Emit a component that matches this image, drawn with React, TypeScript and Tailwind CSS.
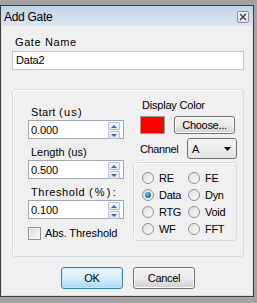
import React from "react";

function Spinner() {
  return (
    <div className="flex flex-col gap-[1px] pr-[3px] pt-[1px]">
      <div className="w-[12px] h-[8px] border border-[#b7c3d3] rounded-[1px] bg-gradient-to-b from-[#f3f6fa] to-[#dbe3ee] flex items-center justify-center">
        <svg width="6" height="3" viewBox="0 0 6 3"><path d="M3 0L6 3H0Z" fill="#4b6394" /></svg>
      </div>
      <div className="w-[12px] h-[8px] border border-[#b7c3d3] rounded-[1px] bg-gradient-to-b from-[#f3f6fa] to-[#dbe3ee] flex items-center justify-center">
        <svg width="6" height="3" viewBox="0 0 6 3"><path d="M0 0H6L3 3Z" fill="#4b6394" /></svg>
      </div>
    </div>
  );
}

function NumField({ label, value, first }: { label: React.ReactNode; value: string; first?: boolean }) {
  return (
    <div className={first ? "flex flex-col" : "flex flex-col mt-[6px]"}>
      <div className="h-[14px] pl-[3px] whitespace-nowrap">{label}</div>
      <div className="mt-[1px] w-[96px] h-[19px] border border-[#a3a8b0] bg-white flex items-start">
        <div className="flex-1 pl-[2px] pt-[1px] h-[17px] leading-[16px] tracking-[-0.1px]">{value}</div>
        <Spinner />
      </div>
    </div>
  );
}

function Radio({ label, checked }: { label: string; checked?: boolean }) {
  return (
    <div className="flex items-center h-[17px]">
      <div className="w-[12px] h-[12px] rounded-full border border-[#8e9092] bg-gradient-to-br from-[#dedede] to-[#fbfbfb] flex items-center justify-center">
        {checked && (
          <div className="w-[6px] h-[6px] rounded-full bg-[radial-gradient(circle_at_40%_35%,#8fd0f6_0%,#2a86c8_45%,#0d4a86_100%)]" />
        )}
      </div>
      <span className="ml-[5px] tracking-[-0.3px]">{label}</span>
    </div>
  );
}

function Btn({ label, def, w, h }: { label: string; def?: boolean; w: string; h: string }) {
  return (
    <div
      className={
        "rounded-[3px] border flex items-center justify-center tracking-[-0.3px] " +
        w +
        " " +
        h +
        (def
          ? " border-[#3c7fb1] bg-gradient-to-b from-[#eaf6fd] via-[#d9f0fc] to-[#a7d9f5] shadow-[inset_0_0_0_1px_#c5e8fa]"
          : " border-[#707070] bg-gradient-to-b from-[#f2f2f2] via-[#ebebeb] to-[#cfcfcf] shadow-[inset_0_0_0_1px_#fcfcfc]")
      }
    >
      {label}
    </div>
  );
}

export default function App() {
  return (
    <div className="w-[257px] h-[303px] bg-[#a3a3a3] pt-[5px] font-['Liberation_Sans',Arial,sans-serif] text-[11px] leading-[14px] text-black">
      <div className="w-[254px] h-[292px] border border-[#3e3e3e] flex flex-col">
        <div className="h-[20px] bg-gradient-to-b from-[#c2d3e8] to-[#dbe6f2] flex items-start justify-between pl-[3px] pr-[4px]">
          <span className="pt-[4px] text-[12px] tracking-[-0.3px]">Add Gate</span>
          <div className="mt-[5px] w-[12px] h-[12px] rounded-[2px] border border-[#8294ad] bg-gradient-to-b from-[#f7f9fc] to-[#d9e2ee] flex items-center justify-center">
            <svg width="8" height="8" viewBox="0 0 8 8">
              <path d="M1 1L7 7M7 1L1 7" stroke="#ffffff" strokeWidth="3.2" strokeLinecap="square" />
              <path d="M1.5 1.5L6.5 6.5M6.5 1.5L1.5 6.5" stroke="#4a4a4a" strokeWidth="1.6" strokeLinecap="square" />
            </svg>
          </div>
        </div>
        <div className="flex-1 bg-[#f0f0f0] border-x border-b border-[#d3deeb] flex flex-col pt-[9px]">
          <div className="ml-[13px] h-[14px] tracking-[0.6px]">Gate Name</div>
          <div className="mt-[2px] ml-[10px] w-[232px] h-[19px] border border-[#c4c8ce] bg-white pl-[3px] leading-[17px] tracking-[-0.2px]">
            Data2
          </div>
          <div className="mt-[19px] ml-[10px] w-[232px] h-[168px] border border-[#d3dce3] rounded-[3px] shadow-[inset_1px_1px_0_#ffffff] flex">
            <div className="w-[111px] shrink-0 pl-[15px] pt-[15px] flex flex-col">
              <NumField
                first
                value="0.000"
                label={
                  <span className="tracking-[0.3px]">
                    Start <span className="tracking-[1.2px]">(us)</span>
                  </span>
                }
              />
              <NumField value="0.500" label={<span>Length (us)</span>} />
              <NumField
                value="0.100"
                label={
                  <span className="tracking-[0.6px]">
                    Threshold <span className="tracking-[2.2px]">(%):</span>
                  </span>
                }
              />
              <div className="mt-[7px] flex items-center">
                <div className="w-[13px] h-[13px] border border-[#8e8f8f] bg-gradient-to-br from-[#d8d8d8] to-[#fafafa] shadow-[inset_0_0_0_1px_#f4f4f4]" />
                <span className="ml-[4px] whitespace-nowrap tracking-[-0.1px]">Abs. Threshold</span>
              </div>
            </div>
            <div className="ml-[9px] w-[104px] shrink-0 pt-[8px] flex flex-col">
              <div className="ml-[9px] h-[14px] tracking-[-0.2px]">Display Color</div>
              <div className="mt-[4px] ml-[7px] flex items-center">
                <div className="w-[25px] h-[18px] bg-[#ff0000] border border-[#9a9a9a]" />
                <div className="ml-[9px]">
                  <Btn label="Choose..." w="w-[61px]" h="h-[18px]" />
                </div>
              </div>
              <div className="mt-[4px] ml-[7px] flex items-center">
                <span className="w-[47px] tracking-[-0.4px]">Channel</span>
                <div className="w-[50px] h-[21px] rounded-[3px] border border-[#707070] bg-gradient-to-b from-[#f6f6f6] to-[#e2e2e2] flex items-center justify-between pl-[4px] pr-[5px]">
                  <span>A</span>
                  <svg width="7" height="4" viewBox="0 0 7 4"><path d="M0 0H7L3.5 4Z" fill="#000" /></svg>
                </div>
              </div>
              <div className="mt-[3px] w-[104px] h-[79px] border border-[#d3dce3] rounded-[3px] shadow-[inset_1px_1px_0_#ffffff] pt-[6px] pl-[8px] flex">
                <div className="w-[46px] flex flex-col">
                  <Radio label="RE" />
                  <Radio label="Data" checked />
                  <Radio label="RTG" />
                  <Radio label="WF" />
                </div>
                <div className="flex flex-col">
                  <Radio label="FE" />
                  <Radio label="Dyn" />
                  <Radio label="Void" />
                  <Radio label="FFT" />
                </div>
              </div>
            </div>
          </div>
          <div className="mt-[10px] ml-[59px] flex">
            <Btn label="OK" def w="w-[62px]" h="h-[22px]" />
            <div className="ml-[10px]">
              <Btn label="Cancel" w="w-[62px]" h="h-[22px]" />
            </div>
          </div>
        </div>
      </div>
    </div>
  );
}
